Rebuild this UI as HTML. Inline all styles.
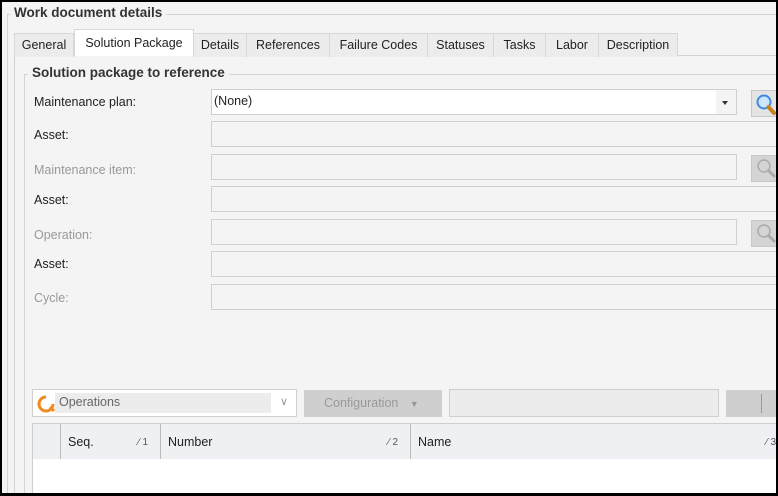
<!DOCTYPE html>
<html><head><meta charset="utf-8"><style>
*{margin:0;padding:0;box-sizing:border-box}
html,body{width:778px;height:496px;overflow:hidden}
body{background:#000;font-family:"Liberation Sans",sans-serif;font-size:12.5px;color:#222;position:relative}
#f{position:absolute;left:2px;top:2px;width:774px;height:491px;background:#f4f4f4;overflow:hidden}
.a{position:absolute}
.b{font-weight:bold;font-size:13.5px;color:#333}
.tab{position:absolute;top:31px;height:24px;border:1px solid #d8d8d8;border-bottom:none;background:#ececec;text-align:center;line-height:23px;font-size:12.5px;color:#222}
.lbl{position:absolute;left:32px;font-size:12.5px;color:#222}
.dis{color:#999}
.in{position:absolute;left:209px;height:26px;border:1px solid #cfcfcf;background:#f4f4f4}
.sb{position:absolute;left:749px;width:25px;height:27px;background:#d4d4d4;border:1px solid #c8c8c8;border-right:none;overflow:hidden}
</style></head><body><div id="f">
<div class="a" style="left:5px;top:12px;width:769px;height:479px;border:1px solid #d4d4d4;border-right:none;border-bottom:none"></div>
<div class="a b" style="left:8px;top:3px;background:#f4f4f4;padding:0 4px">Work document details</div>
<div class="a" style="left:12px;top:53px;width:762px;height:438px;border:1px solid #d4d4d4;border-right:none;border-bottom:none;background:#f4f4f4"></div>
<div class="tab" style="left:12px;width:60px">General</div>
<div class="tab" style="left:72px;top:27px;height:27px;width:120px;background:#fff;line-height:26px;z-index:2">Solution Package</div>
<div class="tab" style="left:191px;width:54px">Details</div>
<div class="tab" style="left:244px;width:84px">References</div>
<div class="tab" style="left:327px;width:99px">Failure Codes</div>
<div class="tab" style="left:425px;width:67px">Statuses</div>
<div class="tab" style="left:491px;width:53px">Tasks</div>
<div class="tab" style="left:543px;width:54px">Labor</div>
<div class="tab" style="left:596px;width:80px">Description</div>
<div class="a" style="left:22px;top:72px;width:752px;height:419px;border:1px solid #d4d4d4;border-right:none;border-bottom:none"></div>
<div class="a b" style="left:26px;top:63px;background:#f4f4f4;padding:0 4px">Solution package to reference</div>

<div class="lbl" style="top:93px">Maintenance plan:</div>
<div class="in" style="top:87px;width:526px;background:#fff;padding:4px 2px;font-size:12.5px">(None)
<div class="a" style="right:0;top:0;width:20px;height:24px;background:#f4f4f4"></div>
<div class="a" style="right:8px;top:11px;border-left:3px solid transparent;border-right:3px solid transparent;border-top:4px solid #333"></div></div>
<div class="sb" style="top:88px;background:#e4e4e4">
<svg width="28" height="26" viewBox="0 0 28 26"><circle cx="12" cy="11" r="6.5" fill="#cfe6ff" stroke="#3d8ae0" stroke-width="2"/><path d="M16.5 16 L22 22" stroke="#c8821c" stroke-width="4" stroke-linecap="round"/></svg></div>

<div class="lbl" style="top:126px">Asset:</div>
<div class="in" style="top:119px;width:570px"></div>

<div class="lbl dis" style="top:161px">Maintenance item:</div>
<div class="in" style="top:152px;width:526px"></div>
<div class="sb" style="top:153px"><svg width="28" height="26" viewBox="0 0 28 26"><circle cx="12" cy="10" r="6" fill="none" stroke="#aaa" stroke-width="1.5"/><path d="M16.5 14.5 L22 20" stroke="#aaa" stroke-width="3" stroke-linecap="round"/></svg></div>

<div class="lbl" style="top:191px">Asset:</div>
<div class="in" style="top:184px;width:570px"></div>

<div class="lbl dis" style="top:226px">Operation:</div>
<div class="in" style="top:217px;width:526px"></div>
<div class="sb" style="top:218px"><svg width="28" height="26" viewBox="0 0 28 26"><circle cx="12" cy="10" r="6" fill="none" stroke="#aaa" stroke-width="1.5"/><path d="M16.5 14.5 L22 20" stroke="#aaa" stroke-width="3" stroke-linecap="round"/></svg></div>

<div class="lbl" style="top:255px">Asset:</div>
<div class="in" style="top:249px;width:570px"></div>

<div class="lbl dis" style="top:289px">Cycle:</div>
<div class="in" style="top:282px;width:570px"></div>

<div class="a" style="left:30px;top:387px;width:265px;height:28px;border:1px solid #cfcfcf;background:#fff">
<div class="a" style="left:22px;top:3px;width:216px;height:20px;background:#ececec"></div>
<svg class="a" style="left:4px;top:5px" width="18" height="18" viewBox="0 0 18 18"><path d="M9 2 A7 7 0 1 0 16 9" fill="none" stroke="#f08a1c" stroke-width="3"/><path d="M13 12 L17 16" stroke="#f08a1c" stroke-width="3"/></svg>
<div class="a" style="left:26px;top:5px;color:#666">Operations</div>
<div class="a" style="left:247px;top:5px;color:#999;font-size:11px">&#8744;</div>
</div>
<div class="a" style="left:302px;top:388px;width:138px;height:27px;background:#cfcfcf;color:#999;line-height:27px;padding-left:20px">Configuration <span style="font-size:9px;margin-left:8px">&#9660;</span></div>
<div class="a" style="left:447px;top:387px;width:270px;height:28px;border:1px solid #cfcfcf;background:#ececec"></div>
<div class="a" style="left:724px;top:388px;width:50px;height:27px;background:#cfcfcf"><div class="a" style="left:35px;top:4px;width:1px;height:19px;background:#999"></div></div>

<div class="a" style="left:30px;top:421px;width:744px;height:70px;border:1px solid #cfcfcf;border-right:none;border-bottom:none;background:#fff">
<div class="a" style="left:0;top:0;width:744px;height:35px;background:#eef0f4"></div>
<div class="a" style="left:27px;top:0;width:1px;height:35px;background:#bbb"></div>
<div class="a" style="left:127px;top:0;width:1px;height:35px;background:#bbb"></div>
<div class="a" style="left:377px;top:0;width:1px;height:35px;background:#bbb"></div>
<div class="a" style="left:35px;top:11px">Seq.</div>
<div class="a" style="left:105px;top:13px;font-size:10px;color:#555">⁄ 1</div>
<div class="a" style="left:135px;top:11px">Number</div>
<div class="a" style="left:355px;top:13px;font-size:10px;color:#555">⁄ 2</div>
<div class="a" style="left:385px;top:11px">Name</div>
<div class="a" style="left:733px;top:13px;font-size:10px;color:#555">⁄ 3</div>
</div>
</div></body></html>
